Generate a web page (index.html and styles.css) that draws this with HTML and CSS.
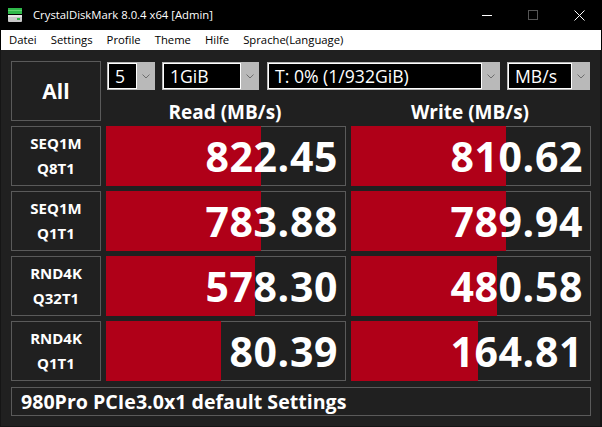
FILE: index.html
```html
<!DOCTYPE html>
<html>
<head>
<meta charset="utf-8">
<title>CrystalDiskMark</title>
<link rel="stylesheet" href="styles.css">
</head>
<body>
<div class="window">
  <div class="titlebar">
    <svg class="app-icon" width="16" height="16" viewBox="0 0 16 16">
      <rect x="1" y="1" width="14" height="6" fill="#2fb84a"/>
      <rect x="1" y="3" width="14" height="1" fill="#5fd36f"/>
      <rect x="1" y="8" width="14" height="7" rx="1" fill="#c8c8c8"/>
      <rect x="1" y="8" width="14" height="2" fill="#e6e6e6"/>
      <rect x="10" y="11" width="3" height="2" fill="#2fb84a"/>
    </svg>
    <span class="title">CrystalDiskMark 8.0.4 x64 [Admin]</span>
    <div class="controls">
      <span class="ctl"><svg width="10" height="10" viewBox="0 0 10 10"><line x1="0" y1="5.5" x2="10" y2="5.5" stroke="#fff" stroke-width="1"/></svg></span>
      <span class="ctl"><svg width="10" height="10" viewBox="0 0 10 10"><rect x="0.5" y="0.5" width="9" height="9" fill="none" stroke="#555" stroke-width="1"/></svg></span>
      <span class="ctl"><svg width="11" height="11" viewBox="0 0 11 11"><path d="M0.5 0.5 L10.5 10.5 M10.5 0.5 L0.5 10.5" stroke="#fff" stroke-width="1"/></svg></span>
    </div>
  </div>
  <div class="menubar">
    <span class="menu-item">Datei</span>
    <span class="menu-item">Settings</span>
    <span class="menu-item">Profile</span>
    <span class="menu-item">Theme</span>
    <span class="menu-item">Hilfe</span>
    <span class="menu-item">Sprache(Language)</span>
  </div>
  <div class="content">
    <div class="grid">
      <div class="all-btn">All</div>
      <div class="top">
        <div class="combos">
          <div class="combo c-count"><span class="combo-text">5</span><span class="combo-arrow"><svg width="8" height="5" viewBox="0 0 8 5"><polyline points="0.5,0.5 4,4 7.5,0.5" fill="none" stroke="#6e6e6e" stroke-width="1"/></svg></span></div>
          <div class="combo c-size"><span class="combo-text">1GiB</span><span class="combo-arrow"><svg width="8" height="5" viewBox="0 0 8 5"><polyline points="0.5,0.5 4,4 7.5,0.5" fill="none" stroke="#6e6e6e" stroke-width="1"/></svg></span></div>
          <div class="combo c-drive"><span class="combo-text">T: 0% (1/932GiB)</span><span class="combo-arrow"><svg width="8" height="5" viewBox="0 0 8 5"><polyline points="0.5,0.5 4,4 7.5,0.5" fill="none" stroke="#6e6e6e" stroke-width="1"/></svg></span></div>
          <div class="combo c-unit"><span class="combo-text">MB/s</span><span class="combo-arrow"><svg width="8" height="5" viewBox="0 0 8 5"><polyline points="0.5,0.5 4,4 7.5,0.5" fill="none" stroke="#6e6e6e" stroke-width="1"/></svg></span></div>
        </div>
        <div class="headers">
          <div class="head">Read (MB/s)</div>
          <div class="head">Write (MB/s)</div>
        </div>
      </div>

      <div class="label">SEQ1M<br>Q8T1</div>
      <div class="result"><div class="bar" style="width:65%"></div><span class="val">822.45</span></div>
      <div class="result"><div class="bar" style="width:65%"></div><span class="val">810.62</span></div>

      <div class="label">SEQ1M<br>Q1T1</div>
      <div class="result"><div class="bar" style="width:65%"></div><span class="val">783.88</span></div>
      <div class="result"><div class="bar" style="width:65%"></div><span class="val">789.94</span></div>

      <div class="label">RND4K<br>Q32T1</div>
      <div class="result"><div class="bar" style="width:62.5%"></div><span class="val">578.30</span></div>
      <div class="result"><div class="bar" style="width:61.2%"></div><span class="val">480.58</span></div>

      <div class="label">RND4K<br>Q1T1</div>
      <div class="result"><div class="bar" style="width:48.3%"></div><span class="val">80.39</span></div>
      <div class="result"><div class="bar" style="width:53.3%"></div><span class="val">164.81</span></div>
    </div>
    <div class="comment">980Pro PCIe3.0x1 default Settings</div>
  </div>
</div>
</body>
</html>
```
FILE: styles.css
```css
* { box-sizing: border-box; }
html, body { margin: 0; padding: 0; background: #000; }
body { font-family: "Open Sans", "Noto Sans", sans-serif; }

.window {
  width: 602px;
  height: 427px;
  display: flex;
  flex-direction: column;
  background: #000;
}

.titlebar {
  height: 30px;
  display: flex;
  align-items: center;
  background: #000;
  color: #fff;
  flex: none;
}
.app-icon { margin-left: 7px; margin-right: 10px; flex: none; }
.title { font-size: 11.3px; line-height: 16px; white-space: nowrap; }
.controls { margin-left: auto; display: flex; height: 30px; }
.ctl {
  width: 46px;
  height: 30px;
  display: flex;
  align-items: center;
  justify-content: center;
}

.menubar {
  height: 20px;
  background: #fff;
  display: flex;
  align-items: center;
  padding-left: 1px;
  flex: none;
  margin: 0 1px;
}
.menu-item {
  font-size: 11.3px;
  line-height: 18px;
  padding: 0 7px;
  color: #000;
  white-space: nowrap;
}

.content {
  flex: 1;
  background: #202020;
  border-left: 1px solid #151515;
  border-right: 2px solid #151515;
  border-bottom: 1px solid #151515;
  padding: 11px 0 0 10px;
}

.grid {
  display: grid;
  grid-template-columns: 90px 240px 240px;
  grid-template-rows: repeat(5, 60px);
  gap: 5px;
}

.all-btn {
  border: 1px solid #5a5a5a;
  display: flex;
  align-items: center;
  justify-content: center;
  color: #fff;
  font-weight: 700;
  font-size: 21px;
}

.top {
  grid-column: 2 / 4;
  display: flex;
  flex-direction: column;
}
.combos {
  display: flex;
  margin-top: 1px;
  padding-left: 1px;
  gap: 7px;
  height: 28px;
}
.combo {
  display: flex;
  background: #b9b9b9;
  padding: 1px 0 1px 1px;
  height: 28px;
}
.c-count { width: 48px; }
.c-size { width: 97px; margin-right: 1px; }
.c-drive { width: 233px; }
.c-unit { width: 83px; }
.combo-text {
  flex: 1;
  background: #000;
  border: 1px solid #fff;
  color: #fff;
  font-size: 17.6px;
  line-height: 24px;
  padding-left: 6px;
  white-space: nowrap;
  overflow: hidden;
}
.combo-arrow {
  width: 18px;
  flex: none;
  display: flex;
  align-items: center;
  justify-content: center;
}

.headers {
  display: grid;
  grid-template-columns: 240px 240px;
  gap: 5px;
  margin-top: 10px;
  margin-left: -1px;
}
.head {
  text-align: center;
  color: #fff;
  font-weight: 700;
  font-size: 19px;
  line-height: 24px;
  white-space: nowrap;
}

.label {
  border: 1px solid #5a5a5a;
  color: #fff;
  font-weight: 700;
  font-size: 15px;
  line-height: 25px;
  text-align: center;
  display: flex;
  align-items: center;
  justify-content: center;
}

.result {
  position: relative;
  border: 1px solid #5a5a5a;
  display: flex;
  align-items: center;
  justify-content: flex-end;
  padding-right: 7px;
}
.bar {
  position: absolute;
  left: -1px;
  top: -1px;
  bottom: -1px;
  background: #b00018;
}
.val {
  position: relative;
  color: #fff;
  font-weight: 700;
  font-size: 41px;
  line-height: 50px;
  letter-spacing: 0.6px;
}

.comment {
  margin-top: 6px;
  width: 580px;
  height: 29px;
  border: 1px solid #5a5a5a;
  color: #fff;
  font-weight: 700;
  font-size: 19.6px;
  line-height: 27px;
  padding-left: 9px;
  white-space: nowrap;
}
```
